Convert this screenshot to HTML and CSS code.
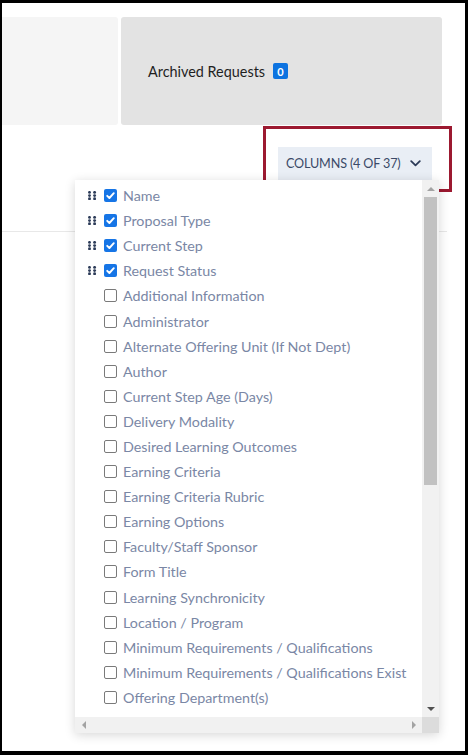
FILE: index.html
```html
<!DOCTYPE html>
<html>
<head>
<meta charset="utf-8">
<link rel="stylesheet" href="styles.css">
</head>
<body>
<div class="frame">
  <div class="tabs">
    <div class="card card-left"></div>
    <div class="card card-right">
      <span class="card-label">Archived Requests</span>
      <span class="badge">0</span>
    </div>
  </div>
  <div class="toolbar">
    <button class="columns-btn">
      <span>COLUMNS (4 OF 37)</span>
      <svg class="chev" width="11" height="7" viewBox="0 0 11 7"><path d="M1.2 1.2 L5.5 5.3 L9.8 1.2" fill="none" stroke="#2c3b58" stroke-width="1.8" stroke-linecap="round" stroke-linejoin="round"/></svg>
    </button>
  </div>
  <div class="divider"></div>

  <div class="highlight"></div>

  <div class="menu">
    <div class="list">
      <div class="row"><span class="handle"><svg width="9" height="9" viewBox="0 0 9 9"><g fill="#2c3b58"><circle cx="1.5" cy="1.4" r="1.45"/><circle cx="6.6" cy="1.4" r="1.45"/><circle cx="1.5" cy="4.6" r="1.45"/><circle cx="6.6" cy="4.6" r="1.45"/><circle cx="1.5" cy="7.8" r="1.45"/><circle cx="6.6" cy="7.8" r="1.45"/></g></svg></span><span class="box on"><svg width="13" height="13" viewBox="0 0 13 13"><path d="M3.2 6.8 L5.4 9 L9.8 4.2" fill="none" stroke="#fff" stroke-width="1.9" stroke-linecap="round" stroke-linejoin="round"/></svg></span><span class="label">Name</span></div>
      <div class="row"><span class="handle"><svg width="9" height="9" viewBox="0 0 9 9"><g fill="#2c3b58"><circle cx="1.5" cy="1.4" r="1.45"/><circle cx="6.6" cy="1.4" r="1.45"/><circle cx="1.5" cy="4.6" r="1.45"/><circle cx="6.6" cy="4.6" r="1.45"/><circle cx="1.5" cy="7.8" r="1.45"/><circle cx="6.6" cy="7.8" r="1.45"/></g></svg></span><span class="box on"><svg width="13" height="13" viewBox="0 0 13 13"><path d="M3.2 6.8 L5.4 9 L9.8 4.2" fill="none" stroke="#fff" stroke-width="1.9" stroke-linecap="round" stroke-linejoin="round"/></svg></span><span class="label">Proposal Type</span></div>
      <div class="row"><span class="handle"><svg width="9" height="9" viewBox="0 0 9 9"><g fill="#2c3b58"><circle cx="1.5" cy="1.4" r="1.45"/><circle cx="6.6" cy="1.4" r="1.45"/><circle cx="1.5" cy="4.6" r="1.45"/><circle cx="6.6" cy="4.6" r="1.45"/><circle cx="1.5" cy="7.8" r="1.45"/><circle cx="6.6" cy="7.8" r="1.45"/></g></svg></span><span class="box on"><svg width="13" height="13" viewBox="0 0 13 13"><path d="M3.2 6.8 L5.4 9 L9.8 4.2" fill="none" stroke="#fff" stroke-width="1.9" stroke-linecap="round" stroke-linejoin="round"/></svg></span><span class="label">Current Step</span></div>
      <div class="row"><span class="handle"><svg width="9" height="9" viewBox="0 0 9 9"><g fill="#2c3b58"><circle cx="1.5" cy="1.4" r="1.45"/><circle cx="6.6" cy="1.4" r="1.45"/><circle cx="1.5" cy="4.6" r="1.45"/><circle cx="6.6" cy="4.6" r="1.45"/><circle cx="1.5" cy="7.8" r="1.45"/><circle cx="6.6" cy="7.8" r="1.45"/></g></svg></span><span class="box on"><svg width="13" height="13" viewBox="0 0 13 13"><path d="M3.2 6.8 L5.4 9 L9.8 4.2" fill="none" stroke="#fff" stroke-width="1.9" stroke-linecap="round" stroke-linejoin="round"/></svg></span><span class="label">Request Status</span></div>
      <div class="row"><span class="handle"></span><span class="box"></span><span class="label">Additional Information</span></div>
      <div class="row"><span class="handle"></span><span class="box"></span><span class="label">Administrator</span></div>
      <div class="row"><span class="handle"></span><span class="box"></span><span class="label">Alternate Offering Unit (If Not Dept)</span></div>
      <div class="row"><span class="handle"></span><span class="box"></span><span class="label">Author</span></div>
      <div class="row"><span class="handle"></span><span class="box"></span><span class="label">Current Step Age (Days)</span></div>
      <div class="row"><span class="handle"></span><span class="box"></span><span class="label">Delivery Modality</span></div>
      <div class="row"><span class="handle"></span><span class="box"></span><span class="label">Desired Learning Outcomes</span></div>
      <div class="row"><span class="handle"></span><span class="box"></span><span class="label">Earning Criteria</span></div>
      <div class="row"><span class="handle"></span><span class="box"></span><span class="label">Earning Criteria Rubric</span></div>
      <div class="row"><span class="handle"></span><span class="box"></span><span class="label">Earning Options</span></div>
      <div class="row"><span class="handle"></span><span class="box"></span><span class="label">Faculty/Staff Sponsor</span></div>
      <div class="row"><span class="handle"></span><span class="box"></span><span class="label">Form Title</span></div>
      <div class="row"><span class="handle"></span><span class="box"></span><span class="label">Learning Synchronicity</span></div>
      <div class="row"><span class="handle"></span><span class="box"></span><span class="label">Location / Program</span></div>
      <div class="row"><span class="handle"></span><span class="box"></span><span class="label">Minimum Requirements / Qualifications</span></div>
      <div class="row"><span class="handle"></span><span class="box"></span><span class="label">Minimum Requirements / Qualifications Exist</span></div>
      <div class="row"><span class="handle"></span><span class="box"></span><span class="label">Offering Department(s)</span></div>
    </div>
    <div class="vscroll">
      <div class="sbtn"><span class="tri-up"></span></div>
      <div class="thumb"></div>
      <div class="track"></div>
      <div class="sbtn"><span class="tri-down"></span></div>
    </div>
    <div class="hscroll">
      <div class="sbtn"><span class="tri-left"></span></div>
      <div class="track"></div>
      <div class="sbtn"><span class="tri-right"></span></div>
    </div>
    <div class="corner"></div>
  </div>
</div>
</body>
</html>
```

FILE: styles.css
```css
html, body {
  margin: 0;
  padding: 0;
  background: #000;
}

.frame {
  position: relative;
  box-sizing: border-box;
  width: 468px;
  height: 755px;
  border-style: solid;
  border-color: #000;
  border-width: 3px 3px 4px 2px;
  background: #fff;
  overflow: hidden;
  font-family: Lato, "Liberation Sans", sans-serif;
}

.tabs {
  display: flex;
  gap: 3px;
  margin-top: 14px;
  height: 108px;
}

.card {
  border-radius: 3px;
}

.card-left {
  width: 116px;
  background: #f5f5f5;
  border-radius: 0 3px 3px 0;
}

.card-right {
  width: 321px;
  background: #e3e3e3;
  display: flex;
  align-items: center;
  padding-left: 27px;
  box-sizing: border-box;
}

.card-label {
  font-size: 14.4px;
  color: #1f1f1f;
}

.badge {
  margin-left: 8px;
  width: 15px;
  height: 16px;
  background: #0d73e0;
  color: #fff;
  font-size: 11px;
  font-weight: 700;
  border-radius: 2px;
  display: flex;
  align-items: center;
  justify-content: center;
}

.toolbar {
  display: flex;
  justify-content: flex-end;
  padding-top: 22px;
  padding-right: 33px;
}

.columns-btn {
  width: 154px;
  height: 33px;
  border: 0;
  background: #e9eef5;
  display: flex;
  align-items: center;
  padding: 0 0 0 8px;
  font-family: Lato, "Liberation Sans", sans-serif;
  font-size: 12.6px;
  color: #3b4a68;
  letter-spacing: -0.15px;
}

.columns-btn .chev {
  margin-left: 9px;
}

.divider {
  margin-top: 51px;
  width: 445px;
  height: 1px;
  background: #e8e8e8;
}

.highlight {
  position: absolute;
  left: 261px;
  top: 123px;
  width: 189px;
  height: 66px;
  box-sizing: border-box;
  border: 3px solid #9c1930;
}

.menu {
  position: absolute;
  left: 73px;
  top: 177px;
  width: 364px;
  height: 553px;
  background: #fff;
  box-shadow: 0 2px 10px rgba(0, 0, 0, 0.16);
  display: grid;
  grid-template-columns: 1fr 17px;
  grid-template-rows: 1fr 16px;
}

.list {
  overflow: hidden;
  padding: 3px 0 0 13px;
}

.row {
  height: 25.1px;
  display: flex;
  align-items: center;
}

.handle {
  width: 9px;
  height: 9px;
  display: flex;
  margin-right: 7px;
}

.box {
  box-sizing: border-box;
  width: 13px;
  height: 13px;
  border: 1px solid #7a7a7a;
  border-radius: 2px;
  background: #fff;
  margin-right: 6px;
  flex: none;
  display: flex;
}

.box.on {
  border: 0;
  background: #1675e6;
}

.label {
  font-size: 14.3px;
  color: #7a87a5;
  white-space: nowrap;
}

.vscroll {
  background: #f1f1f1;
  display: flex;
  flex-direction: column;
}

.vscroll .sbtn {
  height: 17px;
  display: flex;
  align-items: center;
  justify-content: center;
}

.vscroll .thumb {
  height: 288px;
  margin: 0 2px;
  background: #c1c1c1;
}

.vscroll .track {
  flex: 1;
}

.hscroll {
  background: #f1f1f1;
  display: flex;
}

.hscroll .sbtn {
  width: 17px;
  display: flex;
  align-items: center;
  justify-content: center;
}

.hscroll .track {
  flex: 1;
}

.corner {
  background: #dcdcdc;
}

.tri-up {
  width: 0;
  height: 0;
  border-left: 4px solid transparent;
  border-right: 4px solid transparent;
  border-bottom: 4px solid #a3a3a3;
}

.tri-down {
  width: 0;
  height: 0;
  border-left: 4px solid transparent;
  border-right: 4px solid transparent;
  border-top: 4px solid #505050;
}

.tri-left {
  width: 0;
  height: 0;
  border-top: 4px solid transparent;
  border-bottom: 4px solid transparent;
  border-right: 4px solid #a3a3a3;
}

.tri-right {
  width: 0;
  height: 0;
  border-top: 4px solid transparent;
  border-bottom: 4px solid transparent;
  border-left: 4px solid #a3a3a3;
}
```
